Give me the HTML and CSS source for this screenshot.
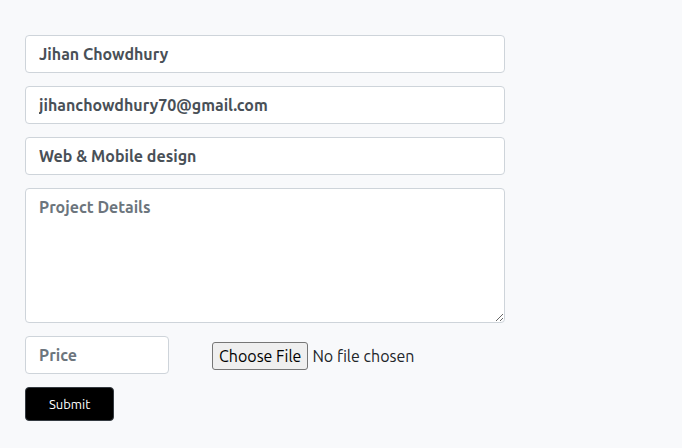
FILE: index.html
```html
<!DOCTYPE html>
<html lang="en">
<head>
<meta charset="utf-8">
<meta name="viewport" content="width=device-width, initial-scale=1">
<title>Order</title>
<link rel="stylesheet" href="styles.css">
</head>
<body>
<form class="order-form">
  <input class="field" type="text" aria-label="Name" value="Jihan Chowdhury">
  <input class="field" type="email" aria-label="Email" value="jihanchowdhury70@gmail.com">
  <input class="field" type="text" aria-label="Service" value="Web &amp; Mobile design">
  <textarea class="field details" aria-label="Project Details" placeholder="Project Details"></textarea>
  <div class="row">
    <input class="field price" type="text" aria-label="Price" placeholder="Price">
    <input class="upload" type="file" aria-label="Project file">
  </div>
  <button class="submit" type="submit">Submit</button>
</form>
</body>
</html>
```

FILE: styles.css
```css
* {
  box-sizing: border-box;
}

body {
  margin: 0;
  padding: 35px 25px 27px;
  background: #f8f9fb;
  color: #212529;
  font-family: Ubuntu, "Noto Sans", sans-serif;
  font-size: 16px;
  line-height: 24px;
}

.order-form {
  display: flex;
  flex-direction: column;
  gap: 13px;
  max-width: 480px;
}

.field {
  display: block;
  width: 100%;
  margin: 0;
  padding: 6px 13px;
  border: 1px solid #ced4da;
  border-radius: 4px;
  background: #fff;
  color: #495057;
  font-family: inherit;
  font-size: 16px;
  font-weight: 700;
  line-height: 24px;
}

.field::placeholder {
  color: #6c757d;
  opacity: 1;
}

.details {
  height: 135px;
  resize: vertical;
}

.row {
  display: flex;
  align-items: flex-end;
  gap: 43px;
}

.price {
  width: 30%;
}

.upload {
  flex: 1;
  min-width: 0;
  padding-bottom: 4px;
  color: inherit;
  font-family: inherit;
  font-size: 16px;
  line-height: 24px;
}

.upload::file-selector-button {
  height: 28px;
  margin: 0 4px 0 0;
  padding: 1px 6px;
  border: 1px solid #767676;
  border-radius: 3px;
  background: #efefef;
  color: #000;
  font: inherit;
}

.submit {
  align-self: flex-start;
  height: 34px;
  padding: 0 23px;
  border: 1px solid #343a40;
  border-radius: 4px;
  background: #000;
  color: #fff;
  font-family: inherit;
  font-size: 13px;
}
```
